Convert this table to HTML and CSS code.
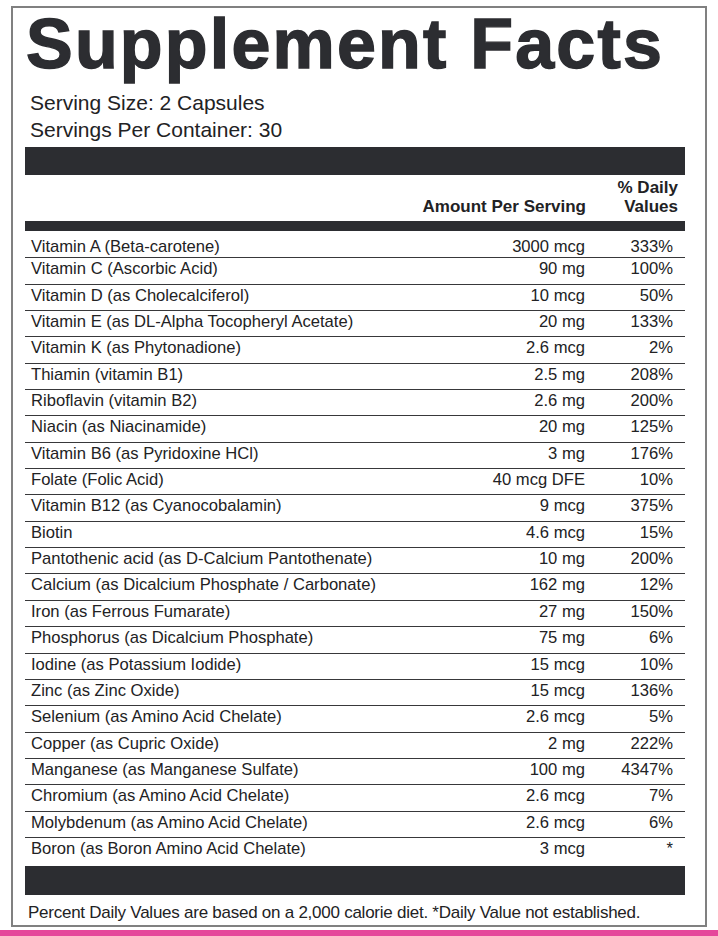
FILE: index.html
```html
<!DOCTYPE html>
<html lang="en">
<head>
<meta charset="utf-8">
<title>Supplement Facts</title>
<link rel="stylesheet" href="styles.css">
</head>
<body>
<div class="label">
  <h1 class="title">Supplement Facts</h1>
  <div class="serving">
    <div>Serving Size: 2 Capsules</div>
    <div>Servings Per Container: 30</div>
  </div>
  <div class="bar bar-top"></div>
  <div class="head">
    <div class="head-name"></div>
    <div class="head-amount">Amount Per Serving</div>
    <div class="head-dv">% Daily<br>Values</div>
  </div>
  <div class="bar bar-thin"></div>
  <div class="rows">
    <div class="row row-first"><span class="name">Vitamin A (Beta-carotene)</span><span class="amt">3000 mcg</span><span class="dv">333%</span></div>
    <div class="row"><span class="name">Vitamin C (Ascorbic Acid)</span><span class="amt">90 mg</span><span class="dv">100%</span></div>
    <div class="row"><span class="name">Vitamin D (as Cholecalciferol)</span><span class="amt">10 mcg</span><span class="dv">50%</span></div>
    <div class="row"><span class="name">Vitamin E (as DL-Alpha Tocopheryl Acetate)</span><span class="amt">20 mg</span><span class="dv">133%</span></div>
    <div class="row"><span class="name">Vitamin K (as Phytonadione)</span><span class="amt">2.6 mcg</span><span class="dv">2%</span></div>
    <div class="row"><span class="name">Thiamin (vitamin B1)</span><span class="amt">2.5 mg</span><span class="dv">208%</span></div>
    <div class="row"><span class="name">Riboflavin (vitamin B2)</span><span class="amt">2.6 mg</span><span class="dv">200%</span></div>
    <div class="row"><span class="name">Niacin (as Niacinamide)</span><span class="amt">20 mg</span><span class="dv">125%</span></div>
    <div class="row"><span class="name">Vitamin B6 (as Pyridoxine HCl)</span><span class="amt">3 mg</span><span class="dv">176%</span></div>
    <div class="row"><span class="name">Folate (Folic Acid)</span><span class="amt">40 mcg DFE</span><span class="dv">10%</span></div>
    <div class="row"><span class="name">Vitamin B12 (as Cyanocobalamin)</span><span class="amt">9 mcg</span><span class="dv">375%</span></div>
    <div class="row"><span class="name">Biotin</span><span class="amt">4.6 mcg</span><span class="dv">15%</span></div>
    <div class="row"><span class="name">Pantothenic acid (as D-Calcium Pantothenate)</span><span class="amt">10 mg</span><span class="dv">200%</span></div>
    <div class="row"><span class="name">Calcium (as Dicalcium Phosphate / Carbonate)</span><span class="amt">162 mg</span><span class="dv">12%</span></div>
    <div class="row"><span class="name">Iron (as Ferrous Fumarate)</span><span class="amt">27 mg</span><span class="dv">150%</span></div>
    <div class="row"><span class="name">Phosphorus (as Dicalcium Phosphate)</span><span class="amt">75 mg</span><span class="dv">6%</span></div>
    <div class="row"><span class="name">Iodine (as Potassium Iodide)</span><span class="amt">15 mcg</span><span class="dv">10%</span></div>
    <div class="row"><span class="name">Zinc (as Zinc Oxide)</span><span class="amt">15 mcg</span><span class="dv">136%</span></div>
    <div class="row"><span class="name">Selenium (as Amino Acid Chelate)</span><span class="amt">2.6 mcg</span><span class="dv">5%</span></div>
    <div class="row"><span class="name">Copper (as Cupric Oxide)</span><span class="amt">2 mg</span><span class="dv">222%</span></div>
    <div class="row"><span class="name">Manganese (as Manganese Sulfate)</span><span class="amt">100 mg</span><span class="dv">4347%</span></div>
    <div class="row"><span class="name">Chromium (as Amino Acid Chelate)</span><span class="amt">2.6 mcg</span><span class="dv">7%</span></div>
    <div class="row"><span class="name">Molybdenum (as Amino Acid Chelate)</span><span class="amt">2.6 mcg</span><span class="dv">6%</span></div>
    <div class="row row-last"><span class="name">Boron (as Boron Amino Acid Chelate)</span><span class="amt">3 mcg</span><span class="dv">*</span></div>
  </div>
  <div class="bar bar-bottom"></div>
  <p class="footnote">Percent Daily Values are based on a 2,000 calorie diet. *Daily Value not established.</p>
</div>
<div class="band"></div>
</body>
</html>
```
FILE: styles.css
```css
html, body {
  margin: 0;
  padding: 0;
  background: #ffffff;
}

body {
  font-family: "Liberation Sans", Arial, sans-serif;
  color: #222224;
  padding-top: 6px;
  overflow: hidden;
}

.label {
  box-sizing: border-box;
  width: 696px;
  margin-left: 11px;
  border: 2px solid #808080;
  padding: 1px 20px 1px 12px;
}

.title {
  margin: 0;
  font-size: 70px;
  line-height: 70px;
  font-weight: 700;
  letter-spacing: 2.2px;
  color: #2c2d31;
  -webkit-text-stroke: 1.4px #2c2d31;
  padding-left: 1px;
  white-space: nowrap;
}

.serving {
  margin-top: 10px;
  padding-left: 5px;
  font-size: 21px;
  line-height: 27px;
}

.bar {
  background: #2c2d31;
}

.bar-top {
  margin-top: 4px;
  height: 28px;
}

.head {
  height: 46px;
  box-sizing: border-box;
  display: grid;
  grid-template-columns: 1fr auto 92px;
  align-items: end;
  padding: 0 7px 5px 6px;
  font-weight: 700;
  font-size: 17px;
  line-height: 19px;
}

.head-amount,
.head-dv {
  text-align: right;
}

.bar-thin {
  height: 10px;
}

.rows {
  padding-top: 1px;
}

.row {
  display: grid;
  grid-template-columns: 1fr 120px 88px;
  padding: 2px 12px 5px 6px;
  font-size: 16.6px;
  line-height: 18.35px;
  border-bottom: 1px solid #38383a;
}

.row-first {
  padding-top: 5.5px;
  padding-bottom: 1.5px;
}

.row-last {
  border-bottom: none;
  padding-bottom: 7.6px;
}

.amt,
.dv {
  text-align: right;
}

.bar-bottom {
  height: 29px;
}

.footnote {
  margin: 9px 0 0;
  padding: 0 0 1.5px 3px;
  font-size: 17px;
  line-height: 18.5px;
  letter-spacing: -0.25px;
  white-space: nowrap;
}

.band {
  margin-top: 3px;
  height: 10px;
  background: #e5489b;
}
```
